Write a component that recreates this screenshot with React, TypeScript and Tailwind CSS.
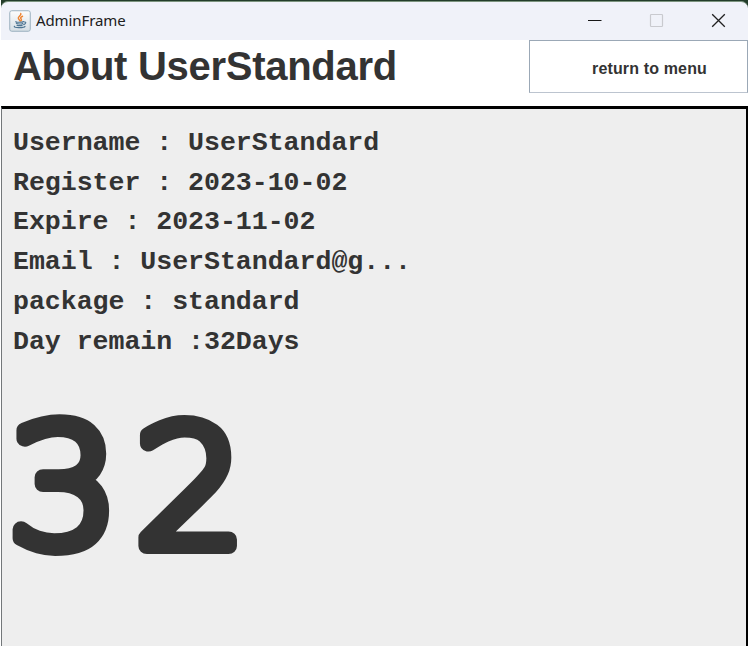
const details = [
  'Username : UserStandard',
  'Register : 2023-10-02',
  'Expire : 2023-11-02',
  'Email : UserStandard@g...',
  'package : standard',
  'Day remain :32Days',
];

function JavaIcon() {
  return (
    <svg className="h-[22px] w-[22px] shrink-0" viewBox="0 0 22 22" fill="none">
      <defs>
        <linearGradient id="tile" x1="0" y1="0" x2="0" y2="1">
          <stop offset="0" stopColor="#fdfdfd" />
          <stop offset="1" stopColor="#d5dee5" />
        </linearGradient>
      </defs>
      <rect x="0.75" y="0.75" width="20.5" height="20.5" rx="2" fill="url(#tile)" stroke="#9bb0bf" />
      <path d="M11.8 3.5c1 2-3.3 3-2.4 5 .3.8 1.3 1.3 1.4 2.3M13.5 6.3c-2.2 1-2.2 2-1.2 3 .4.6.2 1.1-.4 1.6" stroke="#ee8534" strokeWidth="1.5" strokeLinecap="round" />
      <path d="M7 11.6c-1.5.9 6.5.9 7.7-.1M7.4 13.4c1 .8 5 .8 6.4 0M8 15.2c1 .6 4 .6 5.2 0M5.5 16.3c-1.7 1.5 9.5 1.9 10.5.1M15.2 12c2.5-.4 1.7 2-.5 2.6" stroke="#4d7592" strokeWidth="1.15" strokeLinecap="round" />
    </svg>
  );
}

export default function App() {
  return (
    <div className="h-[646px] w-[748px] overflow-hidden bg-white text-[#333333]">
      <div className="flex h-full w-full flex-col pl-px">
        <div className="shrink-0 bg-[#233d2a] pt-px">
          <header className="flex h-[39px] items-center rounded-t-[7px] border-t border-[#7c947f] bg-[#f0f2f9] pl-2">
            <JavaIcon />
            <span className="-mt-0.5 ml-[5px] whitespace-pre font-['Noto_Sans',sans-serif] text-[15px] leading-5 tracking-[-0.1px] text-[#202020]">AdminFrame</span>
            <div className="-mt-0.5 ml-auto flex items-center gap-[47px] pr-[22px]">
              <svg className="h-[15px] w-[15px]" viewBox="0 0 15 15" fill="none">
                <path d="M1 7.5h13.5" stroke="#171717" />
              </svg>
              <svg className="h-[15px] w-[15px]" viewBox="0 0 15 15" fill="none">
                <rect x="1.5" y="1.5" width="12" height="12" rx="0.8" stroke="#c9cacf" strokeWidth="1.2" />
              </svg>
              <svg className="h-[15px] w-[15px]" viewBox="0 0 15 15" fill="none">
                <path d="M1.2 1.2l12.6 12.6M13.8 1.2L1.2 13.8" stroke="#202020" strokeWidth="1.3" />
              </svg>
            </div>
          </header>
        </div>

        <section className="flex h-[66px] shrink-0 items-start justify-between bg-white pl-3">
          <h1 className="whitespace-pre pt-[3px] font-['Liberation_Sans',Arial,sans-serif] text-[40px] font-bold leading-[46px] tracking-[-0.28px]">About UserStandard</h1>
          <button className="flex h-[53px] w-[219px] items-center border border-[#9ba8b6] border-b-[#bcc4cf] bg-white pl-[62px] pt-1 font-['Liberation_Sans',Arial,sans-serif] text-[16px] font-bold leading-5 tracking-[0.15px]">
            return to menu
          </button>
        </section>

        <main className="min-h-0 flex-1 border-l border-r-2 border-t-[3px] border-l-[#73777a] border-r-black border-t-black bg-[#eeeeee] pl-[11px] pt-[15px] font-['Liberation_Mono','Courier_New',monospace] font-bold">
          {details.map((line) => (
            <p key={line} className="whitespace-pre text-[26.6px] leading-[39.7px] tracking-[-0.04px]">{line}</p>
          ))}
          <svg className="mt-[42px] h-[160px] w-[240px] overflow-visible" viewBox="0 0 240 160">
            <text
              x="-5 114.8"
              y="142"
              transform="scale(1.06 1)"
              className="fill-[#333333] stroke-[#333333] stroke-[16px] font-['DejaVu_Sans'] text-[165px] font-extralight [stroke-linejoin:round]"
            >
              32
            </text>
          </svg>
        </main>
      </div>
    </div>
  );
}
